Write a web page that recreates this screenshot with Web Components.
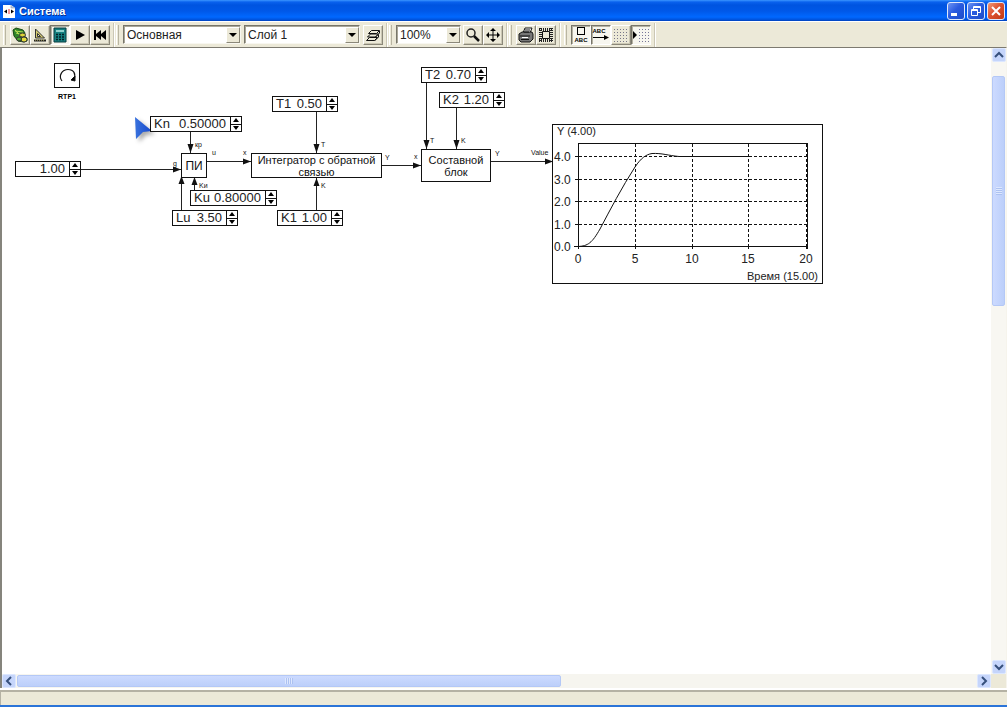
<!DOCTYPE html>
<html lang="ru">
<head>
<meta charset="utf-8">
<title>Система</title>
<style>
html, body { height: 100%; margin: 0; }
body { font-family: "Liberation Sans", Arial, sans-serif; color: #000; overflow: hidden; }
</style>
</head>
<body>
<app-window>
  <title-bar slot="title">Система</title-bar>
  <tool-bar slot="tools"></tool-bar>
  <model-canvas></model-canvas>
  <scroll-strip slot="vertical" direction="vertical" before="14" thumb="229" after="355"></scroll-strip>
  <scroll-strip slot="horizontal" direction="horizontal" before="1" thumb="542" after="416"></scroll-strip>
</app-window>

<script>
class Base extends HTMLElement {
  connectedCallback() {
    if (this.shadowRoot) return;
    this.attachShadow({ mode: "open" }).innerHTML = this.render();
  }
  at(name) { return this.getAttribute(name) || ""; }
}

class AppWindow extends Base {
  render() { return `
<style>
:host { display: flex; flex-direction: column; height: 100vh; background: #ece9d8; box-sizing: border-box; border-bottom: 2px solid #2b74d8; }
main { flex: 1; min-height: 0; display: grid; grid-template-columns: 1fr 15px; grid-template-rows: 1fr 14px; border-left: 2px solid #85847c; border-top: 1px solid #7d7a70; border-right: 1px solid #f6f4ec; }
.view { overflow: hidden; background: #fff; }
footer { height: 13px; margin-top: 2px; border-top: 2px solid #b5b2a4; border-left: 1px solid #b5b2a4; box-shadow: 0 -2px #fff; }
</style>
<slot name="title"></slot>
<slot name="tools"></slot>
<main>
  <div class="view"><slot></slot></div>
  <slot name="vertical"></slot>
  <slot name="horizontal"></slot>
</main>
<footer></footer>`; }
}

class TitleBar extends Base {
  render() { return `
<style>
:host { display: flex; align-items: center; height: 21px; flex: none; gap: 3px; padding: 0 2px; background: linear-gradient(#3c96ff 0, #0a62ee 2px, #0054e0 5px, #0058e8 11px, #0068ff 17px, #0050d8 20px, #003fb8 21px); }
h1 { margin: 0; flex: 1; font: bold 11px "Liberation Sans", Arial, sans-serif; color: #fff; text-shadow: 1px 1px #0b2f8f; }
.buttons { display: flex; gap: 2px; }
button { width: 18px; height: 18px; padding: 0; border: 1px solid #dfe8fb; border-radius: 3px; background: linear-gradient(135deg, #6d94f4, #2a5be0 45%, #1c4cc8); display: grid; place-items: center; }
button.close { background: linear-gradient(135deg, #f09a78, #dd5230 45%, #c03a14); }
svg { display: block; }
</style>
<svg width="14" height="17" viewBox="0 0 14 17"><path d="M1 3h8l4 3v10H1z" fill="#fff"/><path d="M9 3v3h4" fill="#bcd" stroke="#8899bb" stroke-width=".6"/><path d="M2 9.500l3-2v4zM12 9.500l-3-2v4z" fill="#000"/><path d="M7 7v5" stroke="#e33"/></svg>
<h1><slot></slot></h1>
<div class="buttons">
<button aria-label="Свернуть"><svg width="16" height="16"><path d="M3 11.500h6" stroke="#fff" stroke-width="3"/></svg></button>
<button aria-label="Восстановить"><svg width="16" height="16" fill="none" stroke="#fff"><path d="M5.500 6V3.500h7v6H10M5 4.500h8M3.500 6.500h6v6h-6zM3 7.500h7"/></svg></button>
<button class="close" aria-label="Закрыть"><svg width="16" height="16"><path d="M4 4l8 8m0-8l-8 8" stroke="#fff" stroke-width="2"/></svg></button>
</div>`; }
}

const dots = (x0) => {
  let s = "";
  for (let y = 2; y < 15; y += 3) for (let x = x0; x < 16; x += 3) s += `M${x} ${y}h1v1h-1z`;
  return s;
};
const icons = {
  model: `<path d="M1 3l3-2 7 2 2 3-1 3 3 2v3l-3 1-6-1-4-5z" fill="#31862a" stroke="#174a12"/><path d="M3 4l8 1M4 6l6 2M3 3l5 5" stroke="#b8dc54"/><ellipse cx="10.500" cy="8" rx="3" ry="2" fill="#dcd434" stroke="#333"/><ellipse cx="12" cy="12.500" rx="3" ry="2.500" fill="#e4dc3c" stroke="#333"/><ellipse cx="7" cy="12" rx="2.500" ry="2" fill="#4faa30" stroke="#333"/>`,
  ruler: `<path d="M3.500 2v9h9zM5.500 6.500v3h3z" fill="#d8cc70" stroke="#333" fill-rule="evenodd"/><path d="M2 13.500h12" stroke="#222" stroke-width="2"/><path d="M3 13h10" stroke="#d8cc70" stroke-dasharray="1 1"/>`,
  calc: `<path d="M2 1h12v14H2z" fill="#168080" stroke="#063c40"/><path d="M4 3h8v2H4z" fill="#8fd0cc"/><path d="M4 7.500h9M4 10h9M4 12.500h9" stroke="#031f24" stroke-width="1.500" stroke-dasharray="2 1"/>`,
  play: `<path d="M4 3l9 5-9 5z"/>`,
  rewind: `<path d="M2 3h2v4l5-4v4l5-4v10L9 9v4L4 9v4H2z"/>`,
  layers: `<path d="M1.500 13.500l3-3h8l-3 3zM2.500 10l3-3h8l-3 3zM3.500 6.500l3-3h8l-3 3z" fill="#ece9d8" stroke="#111"/><path d="M14.500 4v2l-4 4M13.500 8v2l-4 4" fill="none" stroke="#111"/>`,
  zoom: `<circle cx="6" cy="6" r="4" fill="none" stroke="#222" stroke-width="1.500"/><path d="M9 9l5 5" stroke="#111" stroke-width="2.500"/>`,
  move: `<path d="M8 2v12M2 8h12" stroke="#000"/><path d="M8 1l3 3H5zM8 15l3-3H5zM1 8l3-3v6zM15 8l-3-3v6z"/>`,
  print: `<path d="M5 6l2-5h7l-2 5" fill="#fff" stroke="#111"/><path d="M1 7l3-2h10l1 2v5l-3 3H3l-2-2z" fill="#777" stroke="#111"/><path d="M2 9h10M3 12.500h8M7 3h5M6 5h5" stroke="#111"/><path d="M4 10.500h6" stroke="#fff"/>`,
  frame: `<path d="M1 2.500h14M1 13.500h14M2.500 1v14M13.500 1v14" stroke="#222" stroke-width="3" stroke-dasharray="1 1"/><path d="M4.500 4.500h7v7h-7z" fill="#ece9d8" stroke="#111"/>`,
  grid: `<path d="${dots(1)}" fill="#778"/>`,
  snap: `<path d="M0 4l4 4-4 4z"/><path d="${dots(6)}" fill="#779"/>`
};

class ToolButton extends Base {
  render() {
    const text = { captions: `<rect x="4.500" y=".500" width="7" height="7" fill="none" stroke="#000"/><text x="8" y="15" text-anchor="middle">ABC</text>`,
      ports: `<text x="6" y="6" text-anchor="middle">ABC</text><path d="M0 10.500h12" stroke="#000"/><path d="M11 8l5 2.500-5 2.500z"/>` };
    return `
<style>
:host { display: block; width: 20px; height: 20px; }
button { width: 100%; height: 100%; padding: 0; display: grid; place-items: center; box-sizing: border-box; background: #ece9d8; border: 1px solid; border-color: #fff #8b887a #8b887a #fff; box-shadow: inset -1px -1px #cbc7b4; }
:host([pressed]) button { background: #f7f6ef; border-color: #77756a #fff #fff #77756a; box-shadow: inset 1px 1px #b5b2a2; }
svg { display: block; overflow: visible; }
text { font: bold 6px "Liberation Sans", Arial, sans-serif; }
</style>
<button aria-label="${this.at("label")}" aria-pressed="${this.hasAttribute("pressed")}"><svg width="16" height="16" viewBox="0 0 16 16">${icons[this.at("icon")] || text[this.at("icon")]}</svg></button>`; }
}

class ComboBox extends Base {
  render() { return `
<style>
:host { display: flex; position: relative; height: 19px; box-sizing: border-box; border: 1px solid; border-color: #77756a #f8f7f0 #f8f7f0 #77756a; box-shadow: inset 1px 1px #aaa798; background: #fff; }
select { appearance: none; width: 100%; border: 0; margin: 0; padding: 0 14px 0 3px; background: none; color: #222; font: 12px "Liberation Sans", Arial, sans-serif; outline: 0; }
i { position: absolute; right: 0; top: 1px; bottom: 0; width: 14px; box-sizing: border-box; display: grid; place-items: center; background: #ece9d8; border: 1px solid; border-color: #fff #8b887a #8b887a #fff; pointer-events: none; }
i::before { content: ""; border: 4px solid transparent; border-top-color: #000; border-bottom: 0; }
</style>
<select aria-label="${this.at("label")}"><option>${this.at("value")}</option></select><i></i>`; }
}

class ToolBand extends Base {
  render() { return `
<style>
:host { display: flex; align-items: center; height: 24px; box-sizing: border-box; padding-right: 3px; border-right: 1px solid #cbc7b5; box-shadow: 1px 0 #fff; }
i { width: 1px; height: 20px; margin: 0 4px 0 2px; border-left: 1px solid #fff; border-right: 1px solid #b9b5a2; }
</style><i></i><slot></slot>`; }
}

class ToolBar extends Base {
  render() { return `
<style>
:host { display: flex; align-items: center; flex: none; height: 26px; box-sizing: border-box; padding-left: 1px; border-top: 1px solid #fff; }
tool-band { flex: none; }
tool-band:last-child { margin-left: 2px; }
.main { width: 118px; margin-right: 3px; }
.layer { width: 116px; margin-right: 3px; }
.scale { width: 65px; margin-right: 2px; }
</style>
<tool-band>
<tool-button icon="model" label="Модель"></tool-button><tool-button icon="ruler" label="Редактирование"></tool-button><tool-button icon="calc" label="Расчёт" pressed></tool-button><tool-button icon="play" label="Пуск"></tool-button><tool-button icon="rewind" label="В начало"></tool-button>
</tool-band>
<tool-band>
<combo-box class="main" label="Подсистема" value="Основная"></combo-box><combo-box class="layer" label="Слой" value="Слой 1"></combo-box><tool-button icon="layers" label="Слои"></tool-button>
</tool-band>
<tool-band>
<combo-box class="scale" label="Масштаб" value="100%"></combo-box><tool-button icon="zoom" label="Увеличить"></tool-button><tool-button icon="move" label="Сдвиг"></tool-button>
</tool-band>
<tool-band>
<tool-button icon="print" label="Печать"></tool-button><tool-button icon="frame" label="Рамка"></tool-button>
</tool-band>
<tool-band>
<tool-button icon="captions" label="Имена блоков" pressed></tool-button><tool-button icon="ports" label="Имена портов" pressed></tool-button><tool-button icon="grid" label="Сетка"></tool-button><tool-button icon="snap" label="Привязка" pressed></tool-button>
</tool-band>`; }
}

class ScrollStrip extends Base {
  render() {
    const v = this.at("direction") === "vertical";
    const back = v ? "M2 8l4-4 4 4" : "M8 2l-4 4 4 4";
    const fwd = v ? "M2 4l4 4 4-4" : "M4 2l4 4-4 4";
    return `
<style>
:host { display: flex; flex-direction: ${v ? "column" : "row"}; background: ${v ? "#f8f7f2" : "#f6f5ef"}; min-width: 0; min-height: 0; }
button { flex: none; width: 14px; height: 14px; padding: 0; border: 1px solid #dce7ff; border-radius: 2px; background: #c5d5fb; display: grid; place-items: center; ${v ? "align-self: center;" : ""} }
svg { display: block; }
.track { flex: 1; min-width: 0; min-height: 0; display: flex; flex-direction: inherit; }
.before { flex: ${this.at("before")}; }
.after { flex: ${this.at("after")}; }
.thumb { flex: ${this.at("thumb")}; box-sizing: border-box; border: 1px solid #b4c8f6; border-radius: 2px; margin: ${v ? "0 1px" : "1px 0"}; background: linear-gradient(${v ? "90deg" : "180deg"}, #ccdaff, #bccffa); display: grid; place-items: center; }
.thumb::before { content: ""; width: ${v ? 6 : 8}px; height: ${v ? 8 : 6}px; background: repeating-linear-gradient(${v ? "180deg" : "90deg"}, #eef4ff 0 1px, #9db5ea 1px 2px); opacity: .6; }
</style>
<button aria-label="Назад"><svg width="12" height="12"><path d="${back}" fill="none" stroke="#36507c" stroke-width="2"/></svg></button>
<div class="track" role="scrollbar" aria-valuenow="0" aria-orientation="${this.at("direction")}"><span class="before"></span><span class="thumb"></span><span class="after"></span></div>
<button aria-label="Вперёд"><svg width="12" height="12"><path d="${fwd}" fill="none" stroke="#36507c" stroke-width="2"/></svg></button>`; }
}

/* Nodes share one placement rule: x, y and w attributes are canvas coordinates. */
class CanvasNode extends Base {
  place() { return `position: absolute; left: ${this.at("x")}px; top: ${this.at("y")}px; width: ${this.at("w")}px; box-sizing: border-box; border: 1px solid #111; background: #fff;`; }
}

class SpinField extends CanvasNode {
  render() { return `
<style>
:host { display: flex; height: 16px; ${this.place()} font-size: 13px; line-height: 14px; color: #222; }
label { padding-left: 3px; }
input { flex: 1; min-width: 0; width: 0; border: 0; padding: 0 4px 0 0; margin: 0; background: none; font: inherit; color: inherit; text-align: right; outline: 0; }
.steps { width: 10px; display: flex; flex-direction: column; border-left: 1px solid #111; }
button { flex: 1; border: 0; padding: 0; background: none; display: grid; place-items: center; }
button + button { border-top: 1px solid #111; }
svg { display: block; }
</style>
${this.at("name") ? `<label for="v">${this.at("name")}</label>` : ""}<input id="v" value="${this.at("value")}" aria-label="${this.at("name") || "Задание"}">
<div class="steps"><button aria-label="Больше"><svg width="6" height="4"><path d="M3 0l3 4H0z"/></svg></button><button aria-label="Меньше"><svg width="6" height="4"><path d="M3 4l3-4H0z"/></svg></button></div>`; }
}

class ModelBlock extends CanvasNode {
  render() { return `
<style>
:host { display: grid; place-items: center; height: ${this.at("h")}px; ${this.place()} text-align: center; font-size: ${this.at("size") || 11}px; line-height: 12px; color: #111; }
</style><div><slot></slot></div>`; }
}

class TrendChart extends CanvasNode {
  render() {
    const ys = [["4.0", 32], ["3.0", 55], ["2.0", 77], ["1.0", 100], ["0.0", 122]];
    const xs = [["0", 26], ["5", 83], ["10", 140], ["15", 196], ["20", 254]];
    return `
<style>
:host { display: block; ${this.place()} }
svg { display: block; overflow: visible; margin: -1px; }
text { font: 12px "Liberation Sans", Arial, sans-serif; fill: #222; }
.title { font-size: 11px; }
</style>
<svg width="271" height="160" viewBox="0 0 271 160" fill="none" stroke="#111" shape-rendering="crispEdges">
<path d="M26.500 125V19.500h229V125M22 122.500h234"/>
<path stroke-dasharray="3 2" d="${ys.slice(0, 4).map(([, y]) => `M27 ${y}.500h228`).join("")}${xs.slice(1).map(([, x]) => `M${x}.500 20v102`).join("")}"/>
<path d="${ys.map(([, y]) => `M23 ${y}.500h5`).join("")}${xs.map(([, x]) => `M${x}.500 120v5`).join("")}"/>
<path shape-rendering="auto" d="M26 122.500C36 122 40 119 48 105C58 86 70 63 83 43C89 34 94 30.500 100 29.500C110 29 116 31.500 127 32.500H196"/>
<g stroke="none"><text class="title" x="5" y="11">Y (4.00)</text>
${ys.map(([t, y]) => `<text x="2" y="${y + 5}">${t}</text>`).join("")}
${xs.map(([t, x]) => `<text x="${x}" y="139" text-anchor="middle">${t}</text>`).join("")}
<text class="title" x="266" y="156" text-anchor="end">Время (15.00)</text></g>
</svg>`; }
}

class ModelWires extends Base {
  render() {
    const right = (x, y) => `M${x} ${y}l-8-3v6z`, down = (x, y) => `M${x} ${y}l-3-9h6z`, up = (x, y) => `M${x} ${y}l-3 8h6z`;
    return `
<style>
:host { display: block; position: absolute; left: 0; top: 0; pointer-events: none; }
svg { display: block; overflow: visible; }
text { font: 7px "Liberation Sans", Arial, sans-serif; fill: #111; }
</style>
<svg width="840" height="260" fill="#111">
<path fill="none" stroke="#222" shape-rendering="crispEdges" d="M78 121.500h101M205 113.500h44M380 117.500h39M489 113.500h62M188.500 84v21M192.500 143v-12M179.500 162v-34M314.500 64v41M314.500 162v-32M424.500 35v66M454.500 60v41"/>
<path d="${right(179, 121.5)}${right(249, 113.5)}${right(419, 117.5)}${right(551, 113.5)}${down(188.5, 105)}${up(192.5, 129)}${up(179.5, 128)}${down(314.5, 105)}${up(314.5, 130)}${down(424.5, 101)}${down(454.5, 101)}"/>
<text x="193" y="99">кр</text><text x="197" y="140">Kи</text><text x="171" y="118">g</text>
<text x="210" y="107">u</text><text x="241" y="107">x</text><text x="319" y="99">T</text><text x="319" y="140">K</text>
<text x="383" y="112">Y</text><text x="412" y="111">x</text><text x="428" y="95">T</text><text x="459" y="95">K</text>
<text x="493" y="108">Y</text><text x="529" y="107">Value</text>
</svg>`; }
}

class TimerBlock extends Base {
  render() { return `
<style>
:host { position: absolute; left: ${this.at("x")}px; top: ${this.at("y")}px; display: flex; flex-direction: column; align-items: center; gap: 5px; font-size: 7px; font-weight: bold; line-height: 8px; }
svg { display: block; }
</style>
<svg width="26" height="25" fill="none" stroke="#111"><rect x=".500" y=".500" width="25" height="24" shape-rendering="crispEdges"/><path d="M8 18C4 13 8 6.500 14 6.500S22 11 20 16" stroke-width="1.200"/><path d="M17 17l4-4v5z" fill="#000"/></svg>
<slot></slot>`; }
}

class PointerMark extends Base {
  render() { return `
<style>
:host { display: block; position: absolute; left: ${this.at("x")}px; top: ${this.at("y")}px; pointer-events: none; }
svg { display: block; overflow: visible; filter: drop-shadow(3px 3px 2px #0005); }
</style>
<svg width="18" height="24"><defs><linearGradient id="g"><stop stop-color="#3972dd"/><stop offset="1" stop-color="#1648cc"/></linearGradient></defs><path d="M0 0l17 14-9 1-7 7z" fill="url(#g)"/></svg>`; }
}

class ModelCanvas extends Base {
  render() { return `
<style>:host { display: block; position: relative; height: 100%; background: #fff; }</style>
<model-wires></model-wires>
<timer-block x="52" y="15">RTP1</timer-block>
<spin-field x="13" y="113" w="66" value="1.00"></spin-field>
<pointer-mark x="133" y="69"></pointer-mark>
<spin-field x="148" y="68" w="92" name="Kn" value="0.50000"></spin-field>
<model-block x="179" y="105" w="26" h="25" size="12">ПИ</model-block>
<spin-field x="188" y="142" w="87" name="Ku" value="0.80000"></spin-field>
<spin-field x="170" y="162" w="66" name="Lu" value="3.50"></spin-field>
<spin-field x="270" y="48" w="66" name="T1" value="0.50"></spin-field>
<model-block x="249" y="105" w="131" h="25">Интегратор с обратной связью</model-block>
<spin-field x="275" y="162" w="66" name="K1" value="1.00"></spin-field>
<spin-field x="419" y="19" w="66" name="T2" value="0.70"></spin-field>
<spin-field x="437" y="44" w="66" name="K2" value="1.20"></spin-field>
<model-block x="419" y="101" w="70" h="33">Составной блок</model-block>
<trend-chart x="550" y="76" w="271"></trend-chart>`; }
}

for (const [tag, type] of Object.entries({
  "app-window": AppWindow, "title-bar": TitleBar, "tool-button": ToolButton, "combo-box": ComboBox, "tool-band": ToolBand,
  "tool-bar": ToolBar, "scroll-strip": ScrollStrip, "spin-field": SpinField, "model-block": ModelBlock, "trend-chart": TrendChart,
  "model-wires": ModelWires, "timer-block": TimerBlock, "pointer-mark": PointerMark, "model-canvas": ModelCanvas
})) customElements.define(tag, type);
</script>
</body>
</html>
